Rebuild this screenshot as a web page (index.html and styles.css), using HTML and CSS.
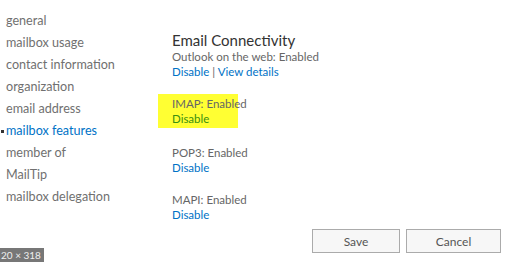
FILE: index.html
```html
<!DOCTYPE html>
<html lang="en">
<head>
    <meta charset="UTF-8">
    <title>Mailbox features</title>
    <link rel="stylesheet" href="styles.css">
</head>
<body>
    <div class="page">
        <ul class="nav">
            <li>general</li>
            <li>mailbox usage</li>
            <li>contact information</li>
            <li>organization</li>
            <li>email address</li>
            <li class="active">mailbox features</li>
            <li>member of</li>
            <li>MailTip</li>
            <li>mailbox delegation</li>
        </ul>

        <div class="content">
            <h2>Email Connectivity</h2>
            <div class="item">
                <div class="status">Outlook on the web: Enabled</div>
                <div><a href="#">Disable</a> | <a href="#">View details</a></div>
            </div>
            <div class="item marked">
                <div class="status">IMAP: Enabled</div>
                <div><a href="#">Disable</a></div>
            </div>
            <div class="item">
                <div class="status">POP3: Enabled</div>
                <div><a href="#">Disable</a></div>
            </div>
            <div class="item">
                <div class="status">MAPI: Enabled</div>
                <div><a href="#">Disable</a></div>
            </div>
        </div>
    </div>

    <div class="buttons">
        <button>Save</button>
        <button>Cancel</button>
    </div>

    <div class="size-badge">20 × 318</div>
</body>
</html>
```

FILE: styles.css
```css
body {
    margin: 0;
    width: 505px;
    height: 262px;
    overflow: hidden;
    position: relative;
    background: #fff;
    font-family: 'Lato', sans-serif;
    color: #666;
}
.page {
    display: flex;
}
.nav {
    list-style: none;
    margin: 0;
    padding: 10px 0 0 6px;
    width: 166px;
    font-size: 12.6px;
}
.nav li {
    height: 22px;
    line-height: 22px;
    color: #707070;
    position: relative;
}
.nav li.active {
    color: #0072c6;
}
.nav li.active::before {
    content: '';
    position: absolute;
    left: -5px;
    top: 10px;
    width: 3px;
    height: 3px;
    background: #333;
}
.content {
    padding-top: 31px;
    font-size: 11.5px;
}
h2 {
    margin: 0;
    font-size: 15px;
    font-weight: normal;
    color: #333;
    line-height: 18px;
}
.item {
    line-height: 15px;
    margin-bottom: 17px;
}
.status {
    color: #666;
}
a {
    color: #0072c6;
    text-decoration: none;
}
.marked {
    background: #ffff33;
    margin-left: -14px;
    padding: 2px 0 2px 14px;
    width: 66px;
    margin-top: -2px;
    margin-bottom: 17px;
    white-space: nowrap;
}
.marked a {
    color: #3a8f10;
}
.buttons {
    position: absolute;
    left: 312px;
    top: 229px;
    display: flex;
    gap: 6px;
}
button {
    height: 24px;
    background: #f7f7f7;
    border: 1px solid #ababab;
    font-family: 'Lato', sans-serif;
    font-size: 12px;
    color: #555;
    padding: 0;
}
button:first-child {
    width: 88px;
}
button:last-child {
    width: 95px;
}
.size-badge {
    position: absolute;
    left: 0;
    bottom: 0;
    background: #777;
    color: #eee;
    font-size: 10px;
    line-height: 13px;
    padding: 1px 3px 0 1px;
}
```
